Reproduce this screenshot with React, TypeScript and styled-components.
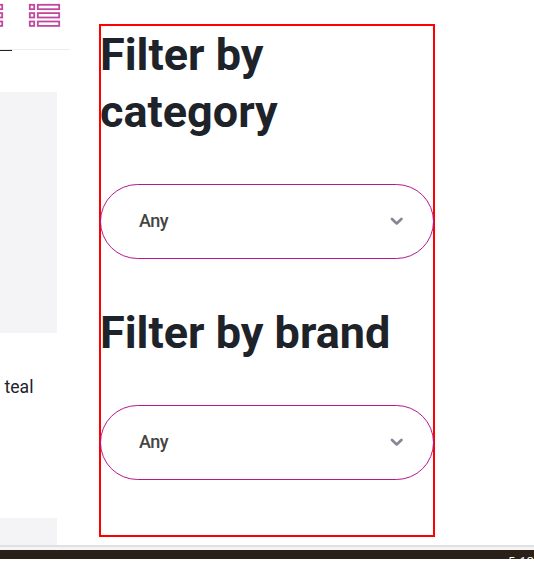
import React from "react";
import styled, { createGlobalStyle } from "styled-components";

const GlobalStyle = createGlobalStyle`
  *, *::before, *::after { box-sizing: border-box; }
  body { margin: 0; background: #fff; overflow: hidden; font-family: Roboto, sans-serif; color: #1e2229; }
`;

const Page = styled.div`
  display: flex;
  flex-direction: column;
  height: 561px;
  width: 534px;
  overflow: hidden;
`;

const Content = styled.main`
  display: grid;
  grid-template-columns: 70px 336px;
  column-gap: 29px;
  height: 545px;
`;

const Catalogue = styled.section`
  display: flex;
  flex-direction: column;
  overflow: hidden;
`;

const ViewBar = styled.header`
  display: flex;
  flex: none;
  height: 50px;
  border-bottom: 1px solid #ececee;
`;

const ViewIcons = styled.svg`
  display: block;
  width: 70px;
  height: 49px;
`;

const ActiveLine = styled.div`
  flex: none;
  width: 12px;
  height: 1px;
  background: #1e2229;
`;

const ProductImage = styled.div<{ $height: number; $gap: number }>`
  flex: none;
  width: 57px;
  height: ${(p) => p.$height}px;
  margin-top: ${(p) => p.$gap}px;
  background: #f4f4f7;
`;

const ProductName = styled.p`
  flex: none;
  height: 24px;
  margin: 42px 0 0;
  padding-left: 4.5px;
  font-size: 17.6px;
  line-height: 24px;
`;

const Filters = styled.aside`
  height: 513px;
  margin-top: 24px;
  border: 2px solid #ff0000;
`;

const Heading = styled.h2<{ $gap: number }>`
  margin: 0 0 ${(p) => p.$gap}px -1px;
  font-size: 45px;
  line-height: 57px;
  font-weight: 700;
`;

const Select = styled.button`
  display: flex;
  align-items: center;
  justify-content: space-between;
  width: 334px;
  height: 75px;
  margin: 0 -1px;
  padding: 0 30px 2px 38px;
  border: 1px solid #b3198b;
  border-radius: 38px;
  background: transparent;
  color: #444;
  font: 500 18px/24px Roboto, sans-serif;
  letter-spacing: -0.5px;
`;

const Chevron = styled.svg`
  width: 13px;
  height: 10px;
`;

const Group = styled.div<{ $top: number }>`
  padding-top: ${(p) => p.$top}px;
`;

const WindowEdge = styled.div`
  flex: none;
  height: 5px;
  border-top: 2px solid #dfe0e2;
  background: #f4f4f4;
`;

const Taskbar = styled.footer`
  display: flex;
  justify-content: flex-end;
  flex: none;
  height: 9px;
  padding-top: 5px;
  overflow: hidden;
  background: #2a2018;
  color: #fff;
  font: 13px/13px "Open Sans", sans-serif;
`;

function FilterSelect() {
  return (
    <Select>
      <span>Any</span>
      <Chevron viewBox="0 0 13 10" fill="none" stroke="#858894" strokeWidth="2.7">
        <path d="M2 3 6.7 7.4 11.4 3" strokeLinejoin="round" strokeLinecap="round" />
      </Chevron>
    </Select>
  );
}

export default function App() {
  return (
    <Page>
      <GlobalStyle />
      <Content>
        <Catalogue>
          <ViewBar>
            <ViewIcons viewBox="0 0 70 49" fill="none" stroke="#c2479f" strokeWidth="1.8">
              {[4.8, 13.1, 21.5].map((y) => (
                <g key={y}>
                  <rect x="-4" y={y} width="6.2" height="4.4" />
                  <rect x="29.8" y={y} width="4.4" height="4.4" />
                  <rect x="37.8" y={y} width="21.4" height="4.4" />
                </g>
              ))}
            </ViewIcons>
          </ViewBar>
          <ActiveLine />
          <ProductImage $height={241} $gap={41} />
          <ProductName>teal</ProductName>
          <ProductImage $height={27} $gap={119} />
        </Catalogue>
        <Filters>
          <Group $top={0}>
            <Heading $gap={44}>Filter by category</Heading>
            <FilterSelect />
          </Group>
          <Group $top={45}>
            <Heading $gap={44}>Filter by brand</Heading>
            <FilterSelect />
          </Group>
        </Filters>
      </Content>
      <WindowEdge />
      <Taskbar>5:18</Taskbar>
    </Page>
  );
}
